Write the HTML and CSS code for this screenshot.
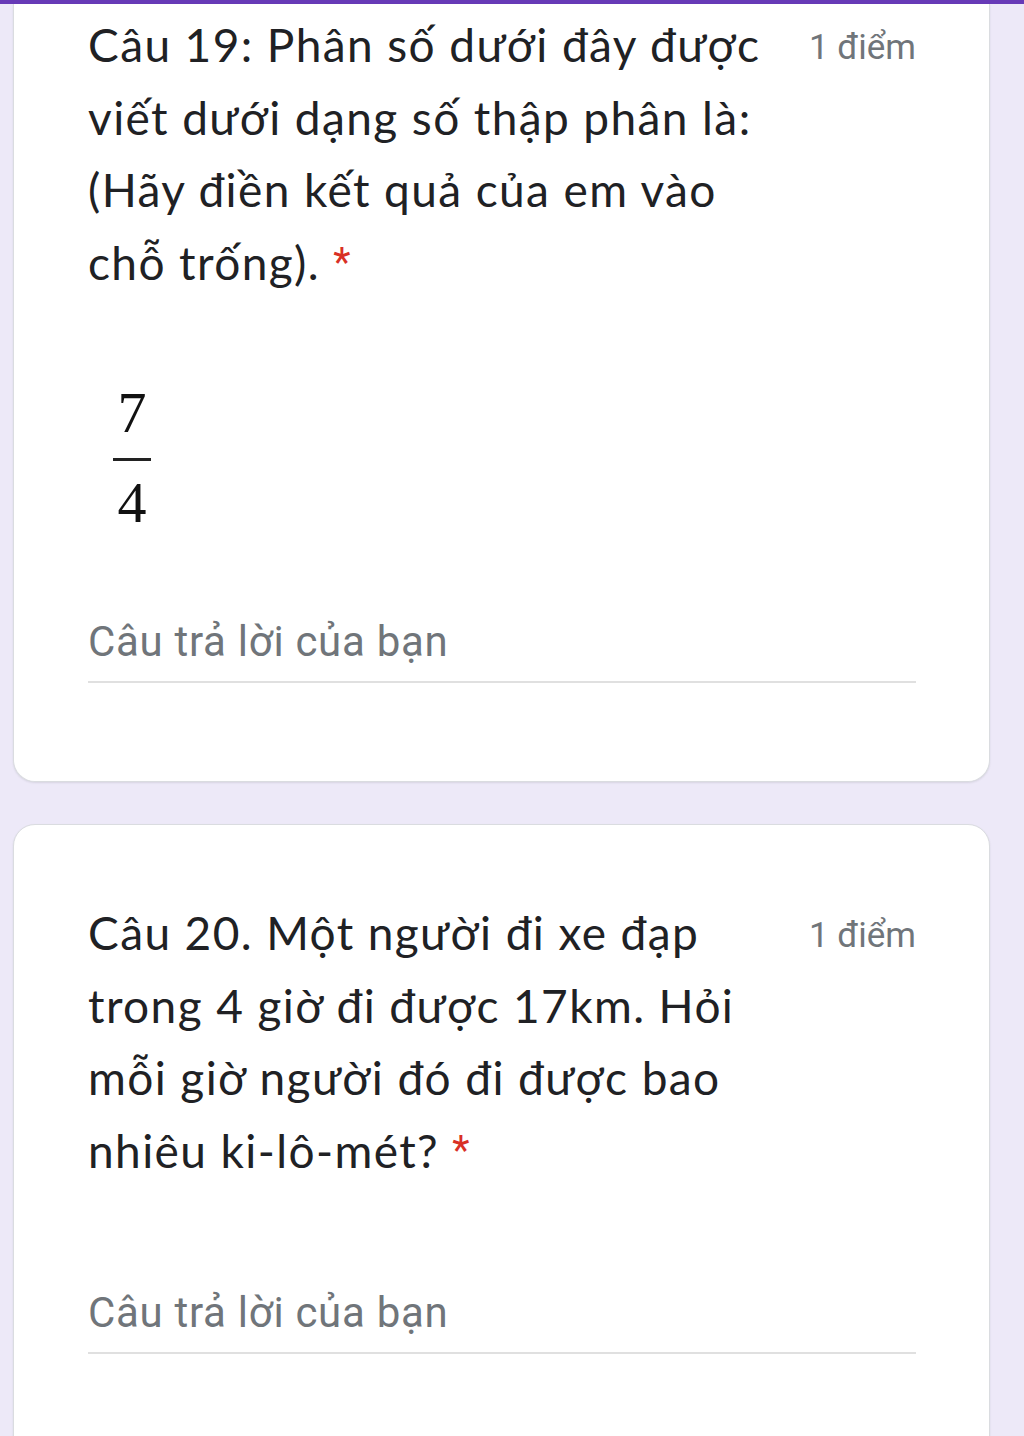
FILE: index.html
```html
<!DOCTYPE html>
<html lang="vi">
<head>
<meta charset="utf-8">
<title>Câu hỏi</title>
<link rel="stylesheet" href="styles.css">
</head>
<body>
<div class="topbar"></div>
<main class="page">
  <section class="card card-first">
    <div class="q-head">
      <div class="q-title">Câu 19: Phân số dưới đây được<br>viết dưới dạng số thập phân là:<br>(Hãy điền kết quả của em vào<br>chỗ trống). <span class="req">*</span></div>
      <div class="q-points">1 điểm</div>
    </div>
    <div class="fraction">
      <span class="num">7</span>
      <span class="fbar"></span>
      <span class="den">4</span>
    </div>
    <div class="answer">Câu trả lời của bạn</div>
  </section>
  <section class="card card-second">
    <div class="q-head">
      <div class="q-title">Câu 20. Một người đi xe đạp<br>trong 4 giờ đi được 17km. Hỏi<br>mỗi giờ người đó đi được bao<br>nhiêu ki-lô-mét? <span class="req">*</span></div>
      <div class="q-points">1 điểm</div>
    </div>
    <div class="answer answer-second">Câu trả lời của bạn</div>
  </section>
</main>
</body>
</html>
```
FILE: styles.css
```css
html, body {
  margin: 0;
  padding: 0;
}
body {
  background: #ede9f8;
  height: 1436px;
  overflow: hidden;
  font-family: Lato, "Noto Sans", sans-serif;
  color: #202124;
}
.topbar {
  height: 4px;
  background: #673ab7;
}
.page {
  padding: 0 34px 0 13px;
  display: flex;
  flex-direction: column;
  gap: 42px;
}
.card {
  background: #fff;
  border: 1px solid #dadce0;
  border-radius: 22px;
  padding: 0 73px 0 74px;
  box-shadow: 0 1px 2px rgba(60, 64, 67, 0.12);
}
.card-first {
  border-top: none;
  border-top-left-radius: 0;
  border-top-right-radius: 0;
  padding-top: 5px;
  padding-bottom: 98px;
}
.card-second {
  padding-top: 72px;
  padding-bottom: 120px;
}
.q-head {
  display: flex;
  align-items: flex-start;
  gap: 20px;
}
.q-title {
  flex: 1;
  white-space: nowrap;
  font-size: 46px;
  line-height: 72.5px;
  letter-spacing: 1.4px;
}
.req {
  font-family: Roboto, "Liberation Sans", sans-serif;
  font-size: 40px;
  letter-spacing: 0;
  color: #d93025;
  vertical-align: 4px;
}
.q-points {
  font-family: Roboto, "Liberation Sans", sans-serif;
  font-size: 35px;
  line-height: 72px;
  padding-top: 3px;
  color: #70757a;
  white-space: nowrap;
}
.fraction {
  display: inline-flex;
  flex-direction: column;
  align-items: center;
  width: 38px;
  margin: 85px 0 0 25px;
  font-family: "Liberation Serif", "Times New Roman", serif;
  font-size: 58px;
  line-height: 1;
  color: #111;
}
.fbar {
  display: block;
  width: 38px;
  height: 3px;
  background: #222;
  margin: 16px 0 13px;
}
.answer {
  margin-top: 86px;
  font-family: Roboto, "Liberation Sans", sans-serif;
  font-size: 42px;
  letter-spacing: 0.7px;
  line-height: 48px;
  color: #70757a;
  padding-bottom: 15px;
  border-bottom: 2px solid #e0e0e0;
}
.answer-second {
  margin-top: 102px;
}
```
